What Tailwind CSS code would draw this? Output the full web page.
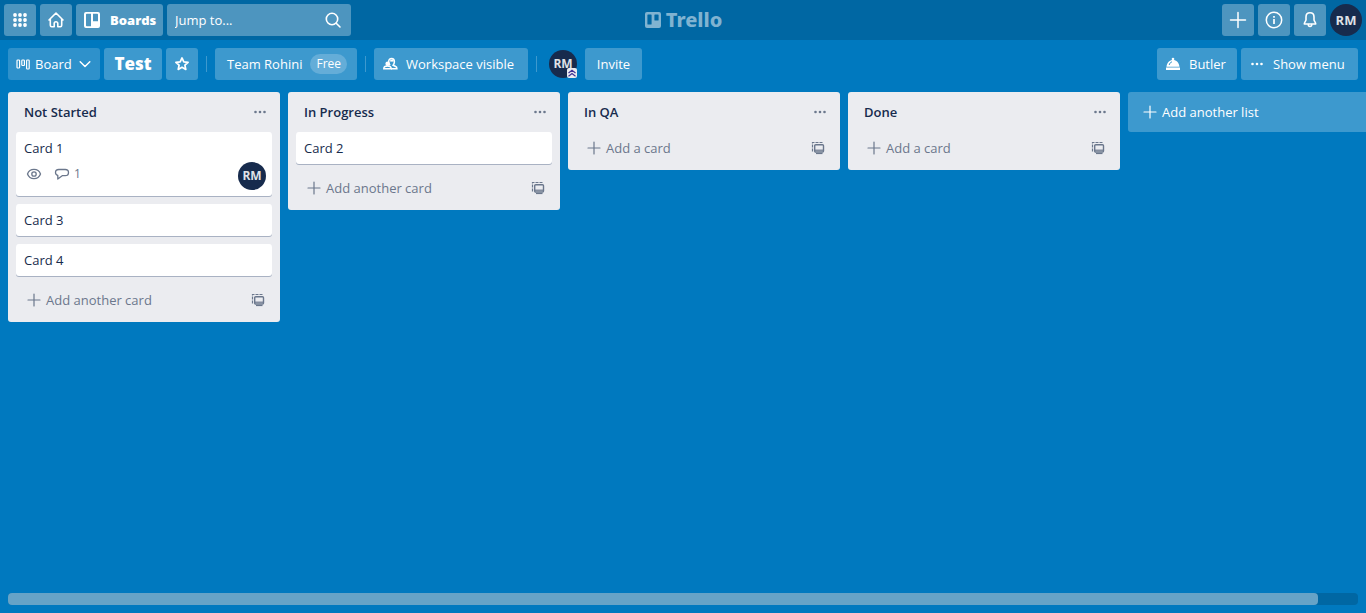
<!DOCTYPE html>
<html lang="en">
<head>
<meta charset="utf-8">
<meta name="viewport" content="width=device-width, initial-scale=1">
<title>Test | Trello</title>
<script src="https://cdn.jsdelivr.net/npm/@tailwindcss/browser@4"></script>
</head>
<body class="flex h-screen flex-col overflow-hidden bg-[#0079bf] font-['Open_Sans','Noto_Sans',sans-serif] text-[13px] leading-5 text-[#172b4d]">
<svg class="hidden" aria-hidden="true">
  <symbol id="plus" viewBox="0 0 16 16"><path d="M8 2v12M2 8h12" fill="none" stroke="currentColor" stroke-width="1.2" stroke-linecap="round"/></symbol>
  <symbol id="dots" viewBox="0 0 16 16"><g fill="currentColor"><circle cx="3.5" cy="8" r="1.3"/><circle cx="8" cy="8" r="1.3"/><circle cx="12.5" cy="8" r="1.3"/></g></symbol>
  <symbol id="template" viewBox="0 0 16 16"><g fill="none" stroke="currentColor"><path d="M2.5 11.500V2.500H13" stroke-width="1.200" stroke-dasharray="3 1"/><rect x="4.700" y="4.700" width="8.800" height="7.300" rx="1" stroke-width="1.400"/><path d="M5 10.200h8.200" stroke-width="1.200"/><path d="M6 13.500h6.500" stroke-width="1.200"/></g></symbol>
</svg>

<header class="flex h-10 shrink-0 items-center justify-between bg-[#0067a3] px-1 text-white">
  <nav class="flex flex-1 gap-1">
    <button aria-label="Apps" class="flex size-8 items-center justify-center rounded-[3px] bg-[#4d95bf]">
      <svg class="size-4" viewBox="0 0 16 16" fill="currentColor"><circle cx="3" cy="3" r="1.900"/><circle cx="8" cy="3" r="1.900"/><circle cx="13" cy="3" r="1.900"/><circle cx="3" cy="8" r="1.900"/><circle cx="8" cy="8" r="1.900"/><circle cx="13" cy="8" r="1.900"/><circle cx="3" cy="13" r="1.900"/><circle cx="8" cy="13" r="1.900"/><circle cx="13" cy="13" r="1.900"/></svg>
    </button>
    <a href="#" aria-label="Home" class="flex size-8 items-center justify-center rounded-[3px] bg-[#4d95bf]">
      <svg class="size-5" viewBox="0 0 20 20" fill="none" stroke="currentColor" stroke-width="1.600" stroke-linejoin="round" stroke-linecap="round"><path d="M3 10 10 3l7 7M4.300 9v6.200c0 .9.500 1.500 1.400 1.500h2.500v-3.200a1.800 1.800 0 0 1 3.600 0v3.200h2.500c.9 0 1.400-.6 1.400-1.500V9"/></svg>
    </a>
    <button class="flex h-8 w-[87px] items-center gap-2 rounded-[3px] bg-[#4d95bf] pl-1.5 font-extrabold">
      <svg class="size-5 shrink-0" viewBox="0 0 20 20"><path fill="currentColor" fill-rule="evenodd" d="M4 2h12a2 2 0 0 1 2 2v12a2 2 0 0 1-2 2H4a2 2 0 0 1-2-2V4a2 2 0 0 1 2-2Zm.8 1.800a.8.8 0 0 0-.8.800v10.800c0 .4.400.8.800.8h4.200V3.800Zm6.200 0v7.500h5V4.600a.8.800 0 0 0-.8-.8Z"/></svg>
      Boards
    </button>
    <label class="flex h-8 w-46 items-center rounded-[3px] bg-[#4d95bf] pr-2 pl-2">
      <input type="text" aria-label="Jump to" placeholder="Jump to..." class="min-w-0 flex-1 bg-transparent text-[13px] outline-none placeholder:text-white">
      <svg class="size-5 shrink-0" viewBox="0 0 20 20" fill="none" stroke="currentColor" stroke-width="1.600" stroke-linecap="round"><circle cx="9" cy="9" r="5.700"/><path d="m13.200 13.200 3.800 3.800"/></svg>
    </label>
  </nav>
  <a href="#" class="flex items-center gap-1 font-['Noto_Sans',sans-serif] text-[20px] font-extrabold text-[#80b3d1]">
    <svg class="size-4.5" viewBox="0 0 18 18"><path fill="currentColor" fill-rule="evenodd" d="M3 1h12a2 2 0 0 1 2 2v12a2 2 0 0 1-2 2H3a2 2 0 0 1-2-2V3a2 2 0 0 1 2-2Zm1 2.500a.6.600 0 0 0-.6.600v8.800c0 .3.300.6.600.6h3c.3 0 .6-.3.600-.6V4.100a.6.600 0 0 0-.6-.6Zm7 0a.6.600 0 0 0-.6.600v4.800c0 .3.300.6.600.6h3c.3 0 .6-.3.600-.6V4.100a.6.600 0 0 0-.6-.6Z"/></svg>
    Trello
  </a>
  <div class="flex flex-1 justify-end gap-1">
    <button aria-label="Create" class="flex size-8 items-center justify-center rounded-[3px] bg-[#4d95bf]"><svg class="size-5"><use href="#plus"/></svg></button>
    <button aria-label="Information" class="flex size-8 items-center justify-center rounded-[3px] bg-[#4d95bf]">
      <svg class="size-5" viewBox="0 0 20 20" fill="none" stroke="currentColor" stroke-width="1.500"><circle cx="10" cy="10" r="7.700"/><path d="M10 9v5M10 6v1.700" stroke-width="1.700"/></svg>
    </button>
    <button aria-label="Notifications" class="flex size-8 items-center justify-center rounded-[3px] bg-[#4d95bf]">
      <svg class="size-5" viewBox="0 0 20 20" fill="none" stroke="currentColor" stroke-width="1.600" stroke-linejoin="round" stroke-linecap="round"><path d="M10 2.800c-2.500 0-4 1.900-4 4.200v2.800c0 1.400-1.700 2.500-1.700 4.200h11.400c0-1.700-1.700-2.800-1.700-4.200V7c0-2.300-1.500-4.200-4-4.200Z"/><path d="M8.300 14.500a1.700 2 0 0 0 3.400 0"/></svg>
    </button>
    <button aria-label="Account" class="size-8 rounded-full bg-[#172b4d] text-center font-bold text-[#dfe1e6]">RM</button>
  </div>
</header>

<div class="flex shrink-0 items-center justify-between p-2 text-white">
  <div class="flex items-center">
    <button class="mr-1 flex h-8 w-23 items-center gap-1 rounded-[3px] bg-[#2e91cb] pl-2">
      <svg class="size-[15px] shrink-0" viewBox="0 0 15 15" fill="none" stroke="currentColor" stroke-width="1.200"><rect x="1" y="3" width="2.600" height="8" rx=".8"/><rect x="5.800" y="3" width="2.600" height="5.500" rx=".8"/><rect x="10.600" y="3" width="2.600" height="9" rx=".8"/></svg>
      Board
      <svg class="ml-auto mr-2 size-3.5 shrink-0" viewBox="0 0 14 14" fill="none" stroke="currentColor" stroke-width="1.500" stroke-linecap="round" stroke-linejoin="round"><path d="m2.200 4.800 4.800 4.700 4.800-4.700"/></svg>
    </button>
    <h1 class="mr-1 flex h-8 w-[58px] items-center justify-center rounded-[3px] bg-[#3d99ce] text-[17px] font-extrabold">Test</h1>
    <button aria-label="Star board" class="flex size-8 items-center justify-center rounded-[3px] bg-[#3d99ce]">
      <svg class="size-4" viewBox="0 0 16 16" fill="none" stroke="currentColor" stroke-width="1.700" stroke-linejoin="round"><path d="m8 1.900 1.800 3.900 4.300.5-3.200 2.900.9 4.200L8 11.300l-3.800 2.100.9-4.200-3.200-2.900 4.300-.5Z"/></svg>
    </button>
    <span class="mx-2 h-4 w-px bg-[#3d99ce]"></span>
    <button class="flex h-8 w-[142px] items-center gap-2 rounded-[3px] bg-[#3d99ce] pl-3">Team Rohini <span class="rounded-full bg-[#64add8] px-1.5 text-[12px]">Free</span></button>
    <span class="mx-2 h-4 w-px bg-[#3d99ce]"></span>
    <button class="flex h-8 w-[154px] items-center gap-2 rounded-[3px] bg-[#3d99ce] pl-2">
      <svg class="size-4 shrink-0" viewBox="0 0 16 16"><g fill="none" stroke="currentColor" stroke-width="1.500"><path d="M8 9.200c-.7-.8-1.300-2-1.300-3.400C6.700 3.700 7.900 2.500 9.600 2.500s2.800 1.200 2.800 3.300c0 1.400-.6 2.600-1.300 3.400l2.600 1.300c.9.400 1.200 1 1.200 2.200H9"/><path d="M1.800 12.700c0-1.700 1.500-2.700 3.700-2.700s3.700 1 3.700 2.700Z"/></g><circle cx="5.600" cy="7.700" r="2.200" fill="currentColor"/><path d="M8.200 3.600h3.300v2H8.200z" fill="currentColor"/></svg>
      Workspace visible
    </button>
    <span class="mr-3 ml-2 h-4 w-px bg-[#3d99ce]"></span>
    <button aria-label="RM, workspace admin" class="relative mr-2 size-7 rounded-full bg-[#172b4d] text-center text-[12px] font-bold text-[#dfe1e6]">RM
      <svg class="absolute right-0 bottom-0 size-[10px] rounded-[2px] bg-[#ebecf0]" viewBox="0 0 10 10" fill="none" stroke="#403294" stroke-width="1.200"><path d="m1.500 5 3.500-2.800L8.500 5M1.500 8.300 5 5.500l3.500 2.800"/></svg>
    </button>
    <button class="h-8 w-[57px] rounded-[3px] bg-[#3d99ce]">Invite</button>
  </div>
  <div class="flex gap-1">
    <button class="flex h-8 w-20 items-center gap-2 rounded-[3px] bg-[#3d99ce] pl-2">
      <svg class="size-4 shrink-0" viewBox="0 0 16 16" fill="currentColor"><circle cx="8" cy="3" r="1.300"/><path d="M1.500 10.800C2 6.600 4.600 4 8 4s6 2.600 6.500 6.800ZM1 11.600h14V14H1Z"/><path d="M4.200 9c.3-1.600 1.300-2.700 2.800-3.200" fill="none" stroke="#3d99ce"/></svg>
      Butler
    </button>
    <button class="flex h-8 w-[117px] items-center gap-2 rounded-[3px] bg-[#3d99ce] pl-2"><svg class="size-4 shrink-0"><use href="#dots"/></svg>Show menu</button>
  </div>
</div>

<main class="flex min-h-0 flex-1 items-start gap-2 overflow-hidden pt-1 pl-2">
  <section class="w-68 shrink-0 rounded-[3px] bg-[#ebecf0] px-2">
    <div class="flex h-10 items-center justify-between pr-1 pl-2"><h2 class="font-semibold">Not Started</h2><button aria-label="List actions" class="text-[#6b778c]"><svg class="size-4"><use href="#dots"/></svg></button></div>
    <ul>
      <li class="mb-2 rounded-[3px] bg-white px-2 py-1.5 shadow-[0_1px_0_#a9b2c3]">
        <a href="#">Card 1</a>
        <div class="flex h-8 justify-between text-[#6b778c]">
          <div class="flex items-center gap-3 pl-0.5 text-[12px]">
            <svg class="size-4" viewBox="0 0 16 16" fill="none" stroke="currentColor" stroke-width="1.300"><path d="M1.500 8C2.500 5.200 5 3.400 8 3.400S13.500 5.200 14.500 8c-1 2.800-3.500 4.600-6.500 4.600S2.500 10.800 1.500 8Z"/><circle cx="8" cy="8" r="2.200"/></svg>
            <span class="flex items-center gap-1"><svg class="size-4" viewBox="0 0 16 16" fill="none" stroke="currentColor" stroke-width="1.300" stroke-linejoin="round"><path d="M4.800 3.500h6.400c2 0 3.300 1 3.300 3s-1.300 3.200-3.300 3.200H8.200L3.800 13V9.500C2.300 9.100 1.500 8 1.500 6.500c0-2 1.300-3 3.300-3Z"/></svg>1</span>
          </div>
          <button aria-label="Member RM" class="-mr-0.5 mt-1 size-7 rounded-full bg-[#172b4d] text-center text-[12px] font-bold text-[#dfe1e6]">RM</button>
        </div>
      </li>
      <li class="mb-2 rounded-[3px] bg-white px-2 py-1.5 shadow-[0_1px_0_#a9b2c3]"><a href="#">Card 3</a></li>
      <li class="mb-2 rounded-[3px] bg-white px-2 py-1.5 shadow-[0_1px_0_#a9b2c3]"><a href="#">Card 4</a></li>
    </ul>
    <div class="flex h-[38px] items-center justify-between pr-1.5 pb-1.5 pl-2.5 text-[#6b778c]"><button class="flex items-center gap-1"><svg class="size-4"><use href="#plus"/></svg>Add another card</button><button aria-label="Create from template"><svg class="size-4"><use href="#template"/></svg></button></div>
  </section>

  <section class="w-68 shrink-0 rounded-[3px] bg-[#ebecf0] px-2">
    <div class="flex h-10 items-center justify-between pr-1 pl-2"><h2 class="font-semibold">In Progress</h2><button aria-label="List actions" class="text-[#6b778c]"><svg class="size-4"><use href="#dots"/></svg></button></div>
    <ul>
      <li class="mb-2 rounded-[3px] bg-white px-2 py-1.5 shadow-[0_1px_0_#a9b2c3]"><a href="#">Card 2</a></li>
    </ul>
    <div class="flex h-[38px] items-center justify-between pr-1.5 pb-1.5 pl-2.5 text-[#6b778c]"><button class="flex items-center gap-1"><svg class="size-4"><use href="#plus"/></svg>Add another card</button><button aria-label="Create from template"><svg class="size-4"><use href="#template"/></svg></button></div>
  </section>

  <section class="w-68 shrink-0 rounded-[3px] bg-[#ebecf0] px-2">
    <div class="flex h-10 items-center justify-between pr-1 pl-2"><h2 class="font-semibold">In QA</h2><button aria-label="List actions" class="text-[#6b778c]"><svg class="size-4"><use href="#dots"/></svg></button></div>
    <div class="flex h-[38px] items-center justify-between pr-1.5 pb-1.5 pl-2.5 text-[#6b778c]"><button class="flex items-center gap-1"><svg class="size-4"><use href="#plus"/></svg>Add a card</button><button aria-label="Create from template"><svg class="size-4"><use href="#template"/></svg></button></div>
  </section>

  <section class="w-68 shrink-0 rounded-[3px] bg-[#ebecf0] px-2">
    <div class="flex h-10 items-center justify-between pr-1 pl-2"><h2 class="font-semibold">Done</h2><button aria-label="List actions" class="text-[#6b778c]"><svg class="size-4"><use href="#dots"/></svg></button></div>
    <div class="flex h-[38px] items-center justify-between pr-1.5 pb-1.5 pl-2.5 text-[#6b778c]"><button class="flex items-center gap-1"><svg class="size-4"><use href="#plus"/></svg>Add a card</button><button aria-label="Create from template"><svg class="size-4"><use href="#template"/></svg></button></div>
  </section>

  <button class="flex h-10 w-68 shrink-0 items-center gap-1 rounded-[3px] bg-[#3d99ce] pl-3.5 text-white"><svg class="size-4"><use href="#plus"/></svg>Add another list</button>
</main>

<div class="mx-2 mb-2 h-3 shrink-0 rounded bg-[#0067a3]"><div class="h-3 w-[97%] rounded bg-[#66a3c7]"></div></div>
</body>
</html>
